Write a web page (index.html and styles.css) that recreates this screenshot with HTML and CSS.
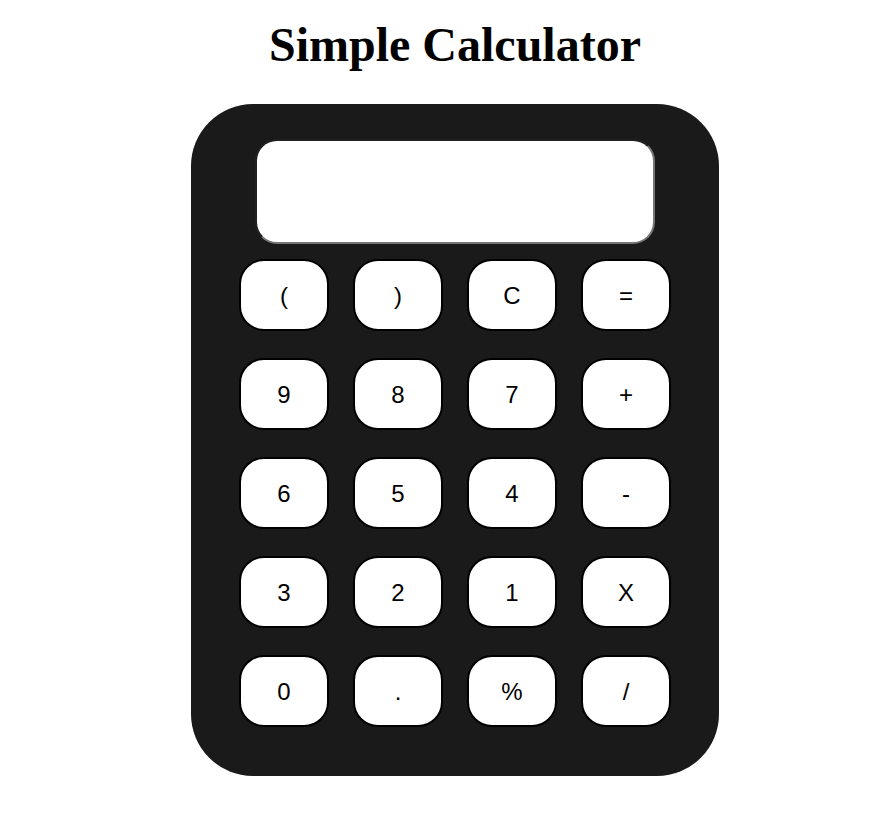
FILE: index.html
```html
<!DOCTYPE html>
<html>
<head>
<meta charset="utf-8">
<title>Simple Calculator</title>
<link rel="stylesheet" href="styles.css">
</head>
<body>
<div class="page">
  <h1 class="title">Simple Calculator</h1>
  <div class="calculator">
    <input class="display" type="text">
    <div class="keys">
      <button class="key">(</button>
      <button class="key">)</button>
      <button class="key">C</button>
      <button class="key">=</button>
      <button class="key">9</button>
      <button class="key">8</button>
      <button class="key">7</button>
      <button class="key">+</button>
      <button class="key">6</button>
      <button class="key">5</button>
      <button class="key">4</button>
      <button class="key">-</button>
      <button class="key">3</button>
      <button class="key">2</button>
      <button class="key">1</button>
      <button class="key">X</button>
      <button class="key">0</button>
      <button class="key">.</button>
      <button class="key">%</button>
      <button class="key">/</button>
    </div>
  </div>
</div>
</body>
</html>
```

FILE: styles.css
```css
html, body {
  margin: 0;
  padding: 0;
  background: #ffffff;
}

.page {
  padding-left: 26px;
  display: flex;
  flex-direction: column;
  align-items: center;
}

.title {
  font-family: "Liberation Serif", "Times New Roman", serif;
  font-weight: bold;
  font-size: 48px;
  line-height: 55px;
  margin: 17px 0 32px 0;
  color: #000;
}

.calculator {
  box-sizing: border-box;
  width: 528px;
  height: 672px;
  background: #1a1a1a;
  border-radius: 62px;
  padding: 35px 48px 49px 48px;
  display: flex;
  flex-direction: column;
  align-items: center;
}

.display {
  box-sizing: border-box;
  width: 400px;
  height: 105px;
  border: 2px inset #767676;
  border-radius: 22px;
  background: #fff;
  margin: 0 0 15px 0;
  padding: 0 10px;
  font-family: "Liberation Sans", Arial, sans-serif;
  font-size: 24px;
  outline: none;
}

.keys {
  display: grid;
  grid-template-columns: repeat(4, 90px);
  grid-auto-rows: 72px;
  column-gap: 24px;
  row-gap: 27px;
}

.key {
  box-sizing: border-box;
  margin: 0;
  padding: 2px 0 0 0;
  background: #fff;
  border: 2px solid #000;
  border-radius: 25px;
  font-family: "Liberation Sans", Arial, sans-serif;
  font-size: 24px;
  color: #000;
}
```
